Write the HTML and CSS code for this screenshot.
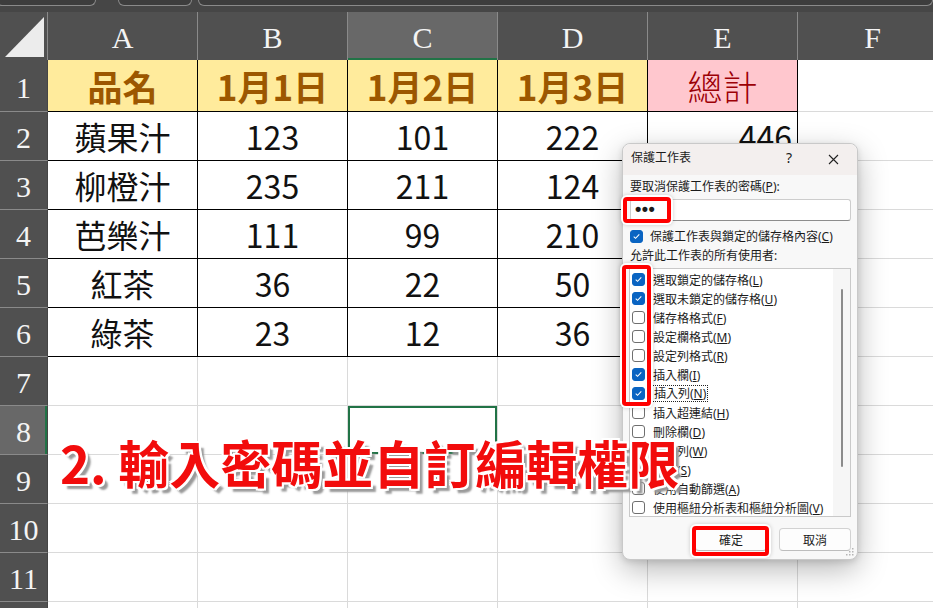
FILE: index.html
```html
<!DOCTYPE html>
<html lang="zh-Hant">
<head>
  <meta charset="UTF-8">
  <title>保護工作表</title>
  <link rel="stylesheet" href="styles.css">
</head>
<body>

<!-- 上方工具列底部 -->
<div class="topbar">
  <div class="box b1"></div>
  <div class="box b2"></div>
  <div class="box b3"></div>
</div>

<!-- 工作表 -->
<div class="sheet">
  <div class="corner"></div>
  <div class="colh">A</div>
  <div class="colh">B</div>
  <div class="colh active">C</div>
  <div class="colh">D</div>
  <div class="colh">E</div>
  <div class="colh">F</div>

  <div class="rowh">1</div>
  <div class="c t head">品名</div>
  <div class="c t head">1月1日</div>
  <div class="c t head">1月2日</div>
  <div class="c t head">1月3日</div>
  <div class="c t total">總計</div>
  <div class="c"></div>

  <div class="rowh">2</div>
  <div class="c t">蘋果汁</div>
  <div class="c t">123</div>
  <div class="c t">101</div>
  <div class="c t">222</div>
  <div class="c t num">446</div>
  <div class="c"></div>

  <div class="rowh">3</div>
  <div class="c t">柳橙汁</div>
  <div class="c t">235</div>
  <div class="c t">211</div>
  <div class="c t">124</div>
  <div class="c t num">570</div>
  <div class="c"></div>

  <div class="rowh">4</div>
  <div class="c t">芭樂汁</div>
  <div class="c t">111</div>
  <div class="c t">99</div>
  <div class="c t">210</div>
  <div class="c t num">420</div>
  <div class="c"></div>

  <div class="rowh">5</div>
  <div class="c t">紅茶</div>
  <div class="c t">36</div>
  <div class="c t">22</div>
  <div class="c t">50</div>
  <div class="c t num">108</div>
  <div class="c"></div>

  <div class="rowh">6</div>
  <div class="c t">綠茶</div>
  <div class="c t">23</div>
  <div class="c t">12</div>
  <div class="c t">36</div>
  <div class="c t num">71</div>
  <div class="c"></div>

  <div class="rowh">7</div>
  <div class="c"></div><div class="c"></div><div class="c"></div><div class="c"></div><div class="c"></div><div class="c"></div>

  <div class="rowh active">8</div>
  <div class="c"></div><div class="c"></div><div class="c sel"></div><div class="c"></div><div class="c"></div><div class="c"></div>

  <div class="rowh">9</div>
  <div class="c"></div><div class="c"></div><div class="c"></div><div class="c"></div><div class="c"></div><div class="c"></div>

  <div class="rowh">10</div>
  <div class="c"></div><div class="c"></div><div class="c"></div><div class="c"></div><div class="c"></div><div class="c"></div>

  <div class="rowh">11</div>
  <div class="c"></div><div class="c"></div><div class="c"></div><div class="c"></div><div class="c"></div><div class="c"></div>

  <!-- 第 12 列只露出上緣 -->
  <div class="rowh"></div>
  <div class="c"></div><div class="c"></div><div class="c"></div><div class="c"></div><div class="c"></div><div class="c"></div>
</div>

<!-- 保護工作表 對話方塊 -->
<div class="dlg">
  <div class="dlg-title">
    <span class="dlg-name">保護工作表</span>
    <span class="help">?</span>
    <span class="close">
      <svg width="11" height="11" viewBox="0 0 11 11"><path d="M1 1 10 10M10 1 1 10" stroke="#222" stroke-width="1.1" fill="none"/></svg>
    </span>
  </div>

  <div class="dlg-body">
    <div class="lbl">要取消保護工作表的密碼(<u>P</u>):</div>
    <div class="pwd">•••</div>
    <div class="opt">
      <span class="cb on"><svg viewBox="0 0 13 13"><path d="M3.2 6.6 5.4 8.7 9.8 4" stroke="#fff" stroke-width="1.2" fill="none"/></svg></span>
      <span>保護工作表與鎖定的儲存格內容(<u>C</u>)</span>
    </div>
    <div class="lbl">允許此工作表的所有使用者:</div>

    <div class="list">
      <div class="items">
        <div class="item"><span class="cb on"><svg viewBox="0 0 13 13"><path d="M3.2 6.6 5.4 8.7 9.8 4" stroke="#fff" stroke-width="1.2" fill="none"/></svg></span><span>選取鎖定的儲存格(<u>L</u>)</span></div>
        <div class="item"><span class="cb on"><svg viewBox="0 0 13 13"><path d="M3.2 6.6 5.4 8.7 9.8 4" stroke="#fff" stroke-width="1.2" fill="none"/></svg></span><span>選取未鎖定的儲存格(<u>U</u>)</span></div>
        <div class="item"><span class="cb"></span><span>儲存格格式(<u>F</u>)</span></div>
        <div class="item"><span class="cb"></span><span>設定欄格式(<u>M</u>)</span></div>
        <div class="item"><span class="cb"></span><span>設定列格式(<u>R</u>)</span></div>
        <div class="item"><span class="cb on"><svg viewBox="0 0 13 13"><path d="M3.2 6.6 5.4 8.7 9.8 4" stroke="#fff" stroke-width="1.2" fill="none"/></svg></span><span>插入欄(<u>I</u>)</span></div>
        <div class="item"><span class="cb on"><svg viewBox="0 0 13 13"><path d="M3.2 6.6 5.4 8.7 9.8 4" stroke="#fff" stroke-width="1.2" fill="none"/></svg></span><span class="focus">插入列(<u>N</u>)</span></div>
        <div class="item"><span class="cb"></span><span>插入超連結(<u>H</u>)</span></div>
        <div class="item"><span class="cb"></span><span>刪除欄(<u>D</u>)</span></div>
        <div class="item"><span class="cb"></span><span>刪除列(<u>W</u>)</span></div>
        <div class="item"><span class="cb"></span><span>排序(<u>S</u>)</span></div>
        <div class="item"><span class="cb"></span><span>使用自動篩選(<u>A</u>)</span></div>
        <div class="item"><span class="cb"></span><span>使用樞紐分析表和樞紐分析圖(<u>V</u>)</span></div>
      </div>
      <div class="track"><div class="thumb"></div></div>
    </div>

    <div class="btns">
      <button class="btn">確定</button>
      <button class="btn">取消</button>
    </div>
  </div>

  <svg class="grip" width="8" height="8" viewBox="0 0 8 8" fill="#b5b5b5">
    <rect x="6" y="0" width="1.5" height="1.5"/><rect x="3" y="3" width="1.5" height="1.5"/><rect x="6" y="3" width="1.5" height="1.5"/>
    <rect x="0" y="6" width="1.5" height="1.5"/><rect x="3" y="6" width="1.5" height="1.5"/><rect x="6" y="6" width="1.5" height="1.5"/>
  </svg>

  <!-- 紅框標示 -->
  <div class="mark m-pwd"></div>
  <div class="mark m-list"></div>
  <div class="mark m-ok"></div>
</div>

<div class="step">2. 輸入密碼並自訂編輯權限</div>

</body>
</html>
```

FILE: styles.css
```css
* { box-sizing: border-box; }

body {
  margin: 0;
  width: 933px;
  height: 608px;
  overflow: hidden;
  background: #fff;
  font-family: "Noto Sans CJK TC", "Noto Sans", sans-serif;
  position: relative;
}

/* 工具列 */
.topbar {
  height: 12px;
  background: #464646;
  display: flex;
  gap: 6px;
}
.topbar .box {
  height: 6px;
  border: 1px solid #8a8a8a;
  border-top: none;
  border-radius: 0 0 6px 6px;
  background: #3d3d3d;
}
.topbar .b1 { width: 100px; margin-left: -4px; }
.topbar .b2 { width: 74px; margin-left: 16px; }
.topbar .b3 { flex: 1; }

/* 工作表格線 */
.sheet {
  display: grid;
  grid-template-columns: 48px repeat(6, 150px);
  grid-template-rows: 48px 52px;
  grid-auto-rows: 49px;
  height: 596px;
  overflow: hidden;
}

.corner {
  background: #505050;
  border-right: 1px solid #8a8a8a;
  position: relative;
}
.corner::after {
  content: "";
  position: absolute;
  left: 5px; top: 5px; right: 3px; bottom: 3px;
  background: #ececec;
  clip-path: polygon(100% 0, 100% 100%, 0 100%);
}

.colh, .rowh {
  background: #505050;
  color: #f4f4f4;
  font-family: "Liberation Serif", serif;
  font-size: 30px;
  display: flex;
  align-items: center;
  justify-content: center;
}
.colh {
  border-right: 1px solid #8a8a8a;
  padding-top: 4px;
}
.colh.active {
  background: #686868;
  box-shadow: inset 0 -2px 0 #217346;
}
.rowh {
  border-bottom: 1px solid #8a8a8a;
  border-right: 1px solid #454545;
  padding-top: 4px;
}
.rowh.active {
  background: #686868;
  box-shadow: inset -2px 0 0 #217346;
}

.c {
  border-right: 1px solid #dadada;
  border-bottom: 1px solid #dadada;
  display: flex;
  align-items: center;
  justify-content: center;
  font-size: 32px;
  color: #111;
}
.c.t {
  border-right-color: #000;
  border-bottom-color: #000;
}
.c.head {
  background: #ffeb9c;
  color: #9c5700;
  font-weight: 700;
  font-size: 35px;
}
.c.total {
  background: #ffc7ce;
  color: #9c0006;
  font-weight: 300;
  font-size: 35px;
}
.c.num {
  justify-content: flex-end;
  padding-right: 5px;
}
.c.sel {
  box-shadow: inset 0 0 0 2px #217346;
}

/* 對話方塊 */
.dlg {
  position: absolute;
  left: 622px;
  top: 143px;
  width: 236px;
  height: 417px;
  background: #f8f8f8;
  border: 1px solid #c9c9c9;
  border-radius: 8px;
  box-shadow: 0 10px 30px rgba(0,0,0,0.28), 0 2px 6px rgba(0,0,0,0.12);
  font-family: "Noto Sans", "Noto Sans CJK TC", sans-serif;
  font-size: 12px;
  color: #1b1b1b;
  z-index: 2;
}
.dlg-title {
  height: 31px;
  background: #f3efee;
  border-radius: 8px 8px 0 0;
  display: flex;
  align-items: flex-start;
  padding: 5px 0 0 8px;
  line-height: 18px;
}
.dlg-name { flex: 1; }
.help { width: 20px; margin-right: 29px; text-align: center; font-size: 14px; }
.close { width: 20px; margin-right: 9px; padding-top: 3px; }

.dlg-body { padding: 0 6px 0 7px; }
.lbl { line-height: 16px; margin-top: 4px; }

.pwd {
  margin-top: 4px;
  height: 22px;
  background: #fff;
  border: 1px solid #cdcdcd;
  border-bottom-color: #8d8d8d;
  border-radius: 3px;
  font-family: "Liberation Sans", sans-serif;
  font-size: 18px;
  font-weight: 700;
  line-height: 19px;
  letter-spacing: 0.5px;
  padding-left: 4px;
}

.opt {
  margin-top: 7px;
  height: 16px;
  display: flex;
  align-items: center;
  gap: 7px;
}

.cb {
  width: 13px;
  height: 13px;
  flex: none;
  border: 1px solid #6f6f6f;
  border-radius: 3px;
  background: #fff;
  display: inline-block;
}
.cb.on {
  background: #0a64c2;
  border-color: #0a64c2;
}
.cb svg { display: block; width: 11px; height: 11px; }

.list {
  margin: 4px 0 0 -1px;
  height: 249px;
  background: #fff;
  border: 1px solid #c9c9c9;
  display: flex;
}
.items { flex: 1; padding: 1px 0 0 2px; overflow: hidden; }
.item {
  height: 19px;
  display: flex;
  align-items: center;
  gap: 8px;
  white-space: nowrap;
}
.focus {
  outline: 1px dotted #222;
  padding: 0 1px;
  line-height: 15px;
}
.track {
  width: 17px;
  background: #f6f6f6;
  position: relative;
}
.thumb {
  position: absolute;
  left: 8px;
  top: 20px;
  width: 2px;
  height: 178px;
  background: #8b8b8b;
  border-radius: 1px;
}

.btns {
  margin-top: 11px;
  display: flex;
  justify-content: flex-end;
  gap: 12px;
}
.btn {
  width: 72px;
  height: 23px;
  background: #fdfdfd;
  border: 1px solid #d2d2d2;
  border-bottom-color: #bdbdbd;
  border-radius: 4px;
  font-family: "Noto Sans CJK TC", sans-serif;
  font-size: 12px;
  color: #1b1b1b;
  padding: 0;
}

.grip { position: absolute; right: 3px; bottom: 3px; }

.mark {
  position: absolute;
  border: 4px solid #f00;
  border-radius: 4px;
  box-shadow: 0 0 0 2px #fff, 0 0 4px 2px rgba(0,0,0,0.18);
}
.m-pwd  { left: 0px;  top: 53px;  width: 48px; height: 26px; }
.m-list { left: -1px; top: 121px; width: 29px; height: 141px; }
.m-ok   { left: 69px; top: 382px; width: 77px; height: 30px; }

/* 步驟說明文字 */
.step {
  position: absolute;
  left: 60px;
  top: 437px;
  z-index: 3;
  font-size: 51px;
  font-weight: 700;
  line-height: 1;
  color: #f20c0c;
  white-space: nowrap;
  text-shadow:
    -2px -2px 0 #fff, 2px -2px 0 #fff, -2px 2px 0 #fff, 2px 2px 0 #fff,
    0 -2px 0 #fff, 0 2px 0 #fff, -2px 0 0 #fff, 2px 0 0 #fff,
    5px 5px 2px #9a9a9a;
}
```
